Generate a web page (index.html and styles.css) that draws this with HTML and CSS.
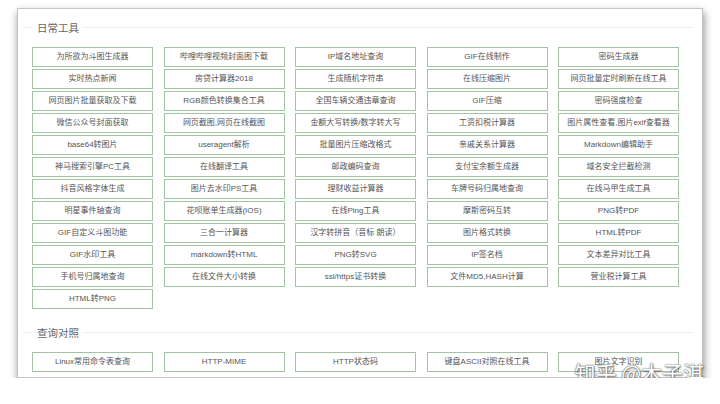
FILE: index.html
```html
<!DOCTYPE html>
<html lang="zh-CN">
<head>
  <meta charset="UTF-8">
  <title>在线工具</title>
  <link rel="stylesheet" href="styles.css">
</head>
<body>

  <div class="panel">

    <!-- 日常工具 -->
    <section class="group">
      <h2 class="group-title"><span>日常工具</span></h2>
      <div class="tool-grid">
        <a href="#">为所欲为斗图生成器</a>
        <a href="#">哔哩哔哩视频封面图下载</a>
        <a href="#">IP域名地址查询</a>
        <a href="#">GIF在线制作</a>
        <a href="#">密码生成器</a>

        <a href="#">实时热点新闻</a>
        <a href="#">房贷计算器2018</a>
        <a href="#">生成随机字符串</a>
        <a href="#">在线压缩图片</a>
        <a href="#">网页批量定时刷新在线工具</a>

        <a href="#">网页图片批量获取及下载</a>
        <a href="#">RGB颜色转换集合工具</a>
        <a href="#">全国车辆交通违章查询</a>
        <a href="#">GIF压缩</a>
        <a href="#">密码强度检查</a>

        <a href="#">微信公众号封面获取</a>
        <a href="#">网页截图,网页在线截图</a>
        <a href="#">金额大写转换/数字转大写</a>
        <a href="#">工资扣税计算器</a>
        <a href="#">图片属性查看,图片exif查看器</a>

        <a href="#">base64转图片</a>
        <a href="#">useragent解析</a>
        <a href="#">批量图片压缩改格式</a>
        <a href="#">亲戚关系计算器</a>
        <a href="#">Markdown编辑助手</a>

        <a href="#">神马搜索引擎PC工具</a>
        <a href="#">在线翻译工具</a>
        <a href="#">邮政编码查询</a>
        <a href="#">支付宝余额生成器</a>
        <a href="#">域名安全拦截检测</a>

        <a href="#">抖音风格字体生成</a>
        <a href="#">图片去水印PS工具</a>
        <a href="#">理财收益计算器</a>
        <a href="#">车牌号码归属地查询</a>
        <a href="#">在线马甲生成工具</a>

        <a href="#">明星事件轴查询</a>
        <a href="#">花呗账单生成器(IOS)</a>
        <a href="#">在线Ping工具</a>
        <a href="#">摩斯密码互转</a>
        <a href="#">PNG转PDF</a>

        <a href="#">GIF自定义斗图功能</a>
        <a href="#">三合一计算器</a>
        <a href="#">汉字转拼音（音标 朗读）</a>
        <a href="#">图片格式转换</a>
        <a href="#">HTML转PDF</a>

        <a href="#">GIF水印工具</a>
        <a href="#">markdown转HTML</a>
        <a href="#">PNG转SVG</a>
        <a href="#">IP签名档</a>
        <a href="#">文本差异对比工具</a>

        <a href="#">手机号归属地查询</a>
        <a href="#">在线文件大小转换</a>
        <a href="#">ssl/https证书转换</a>
        <a href="#">文件MD5,HASH计算</a>
        <a href="#">营业税计算工具</a>

        <a href="#">HTML转PNG</a>
      </div>
    </section>

    <!-- 查询对照 -->
    <section class="group">
      <h2 class="group-title"><span>查询对照</span></h2>
      <div class="tool-grid">
        <a href="#">Linux常用命令表查询</a>
        <a href="#">HTTP-MIME</a>
        <a href="#">HTTP状态码</a>
        <a href="#">键盘ASCII对照在线工具</a>
        <a href="#">图片文字识别</a>
      </div>
    </section>

    <div class="watermark">知乎 @木子淇</div>
  </div>

</body>
</html>
```

FILE: styles.css
```css
body {
  margin: 0;
  background: #fff;
  font-family: 'Liberation Sans', 'Noto Sans CJK SC', sans-serif;
  color: #555;
}

.panel {
  position: relative;
  box-sizing: border-box;
  width: 686px;
  height: 370px;
  margin: 8px 0 0 17px;
  padding: 11px 0 0;
  background: #fff;
  border: 1px solid #c4c4c4;
  box-shadow: 1px 4px 8px rgba(0, 0, 0, 0.45);
}

/* fieldset-like title: short line, text, long line */
.group-title {
  display: flex;
  align-items: center;
  gap: 5px;
  height: 14px;
  margin: 0 9px 13px 5px;
  font-size: 10.5px;
  font-weight: normal;
  color: #666;
}

.group-title::before,
.group-title::after {
  content: "";
  height: 1px;
  background: #ececec;
}

.group-title::before {
  width: 9px;
}

.group-title::after {
  flex: 1;
}

.group + .group {
  margin-top: 16px;
}

.tool-grid {
  display: grid;
  grid-template-columns: repeat(5, 121px);
  column-gap: 10.5px;
  row-gap: 2px;
  padding-left: 14px;
}

.tool-grid a {
  box-sizing: border-box;
  height: 20px;
  line-height: 18px;
  border: 1px solid #a3c4a3;
  text-align: center;
  font-size: 8px;
  color: #555;
  text-decoration: none;
  white-space: nowrap;
  overflow: hidden;
}

.watermark {
  position: absolute;
  right: -2px;
  bottom: -6px;
  font-family: 'Noto Sans CJK SC', sans-serif;
  font-size: 21px;
  line-height: 22px;
  color: #fff;
  text-shadow: 0 0 1px #555, 0 0 2px #777, 1px 1px 2px rgba(0, 0, 0, 0.5);
}
```
